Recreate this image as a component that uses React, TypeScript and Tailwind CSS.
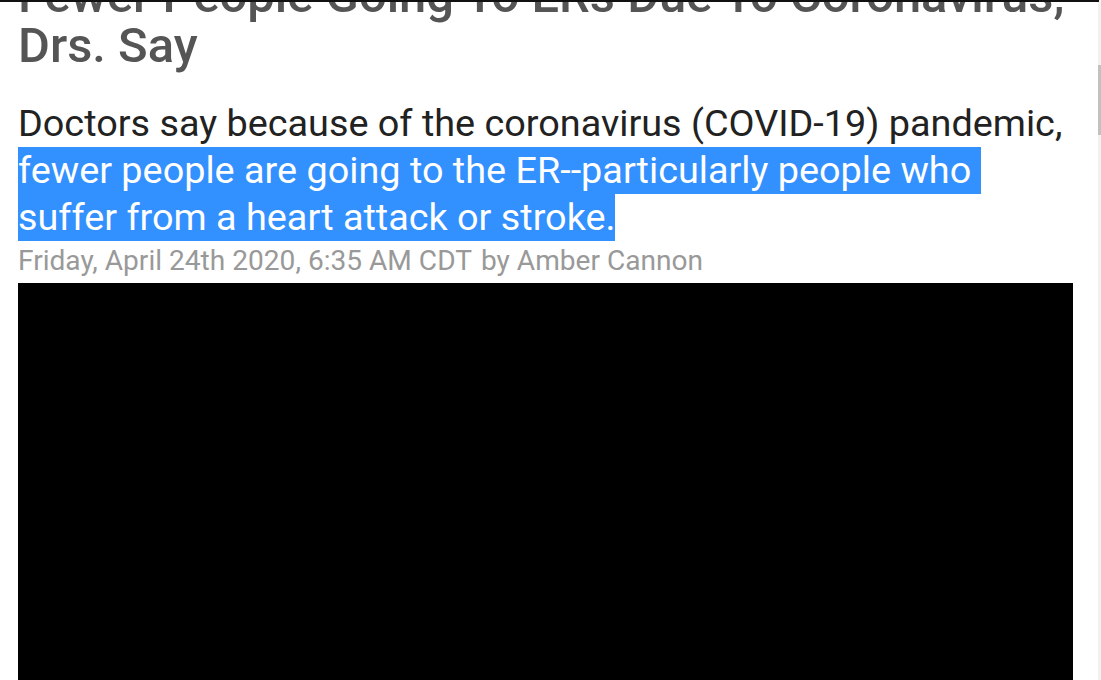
export default function App() {
  const font = { fontFamily: 'Roboto, "Liberation Sans", sans-serif' };
  return (
    <div className="relative flex h-[680px] w-[1101px] overflow-hidden bg-white" style={font}>
      {/* header edge */}
      <div className="absolute left-0 top-0 h-[2px] w-[1099px] bg-[#111]" />

      <div className="flex-1 pl-[18px] pr-[25px]">
        <h1 className="mt-[-29px] text-[48.9px] font-medium leading-[50px] text-[#555]">
          Fewer People Going To ERs Due To Coronavirus,
          <br />
          Drs. Say
        </h1>

        <div className="mt-[29px] text-[37.8px] leading-[47px] text-[#222]">
          <div className="whitespace-nowrap">Doctors say because of the coronavirus (COVID-19) pandemic,</div>
          <div>
            <span className="inline-block h-[47px] whitespace-pre bg-[#3390ff] text-white">
              fewer people are going to the ER--particularly people who{' '}
            </span>
          </div>
          <div>
            <span className="inline-block h-[47px] bg-[#3390ff] text-white">
              suffer from a heart attack or stroke.
            </span>
          </div>
        </div>

        <div className="mt-[2px] mb-[4px] whitespace-nowrap text-[28.1px] leading-[36px] text-[#999]">
          <span>Friday, April 24th 2020, 6:35 AM CDT</span>
          <span className="ml-[9px]">by Amber Cannon</span>
        </div>

        <div className="h-[420px] w-full bg-black" />
      </div>

      {/* scrollbar */}
      <div className="flex w-[3px] flex-col bg-[#f1f1f1]">
        <div className="h-[65px]" />
        <div className="h-[70px] bg-[#c1c1c1]" />
      </div>
    </div>
  );
}
